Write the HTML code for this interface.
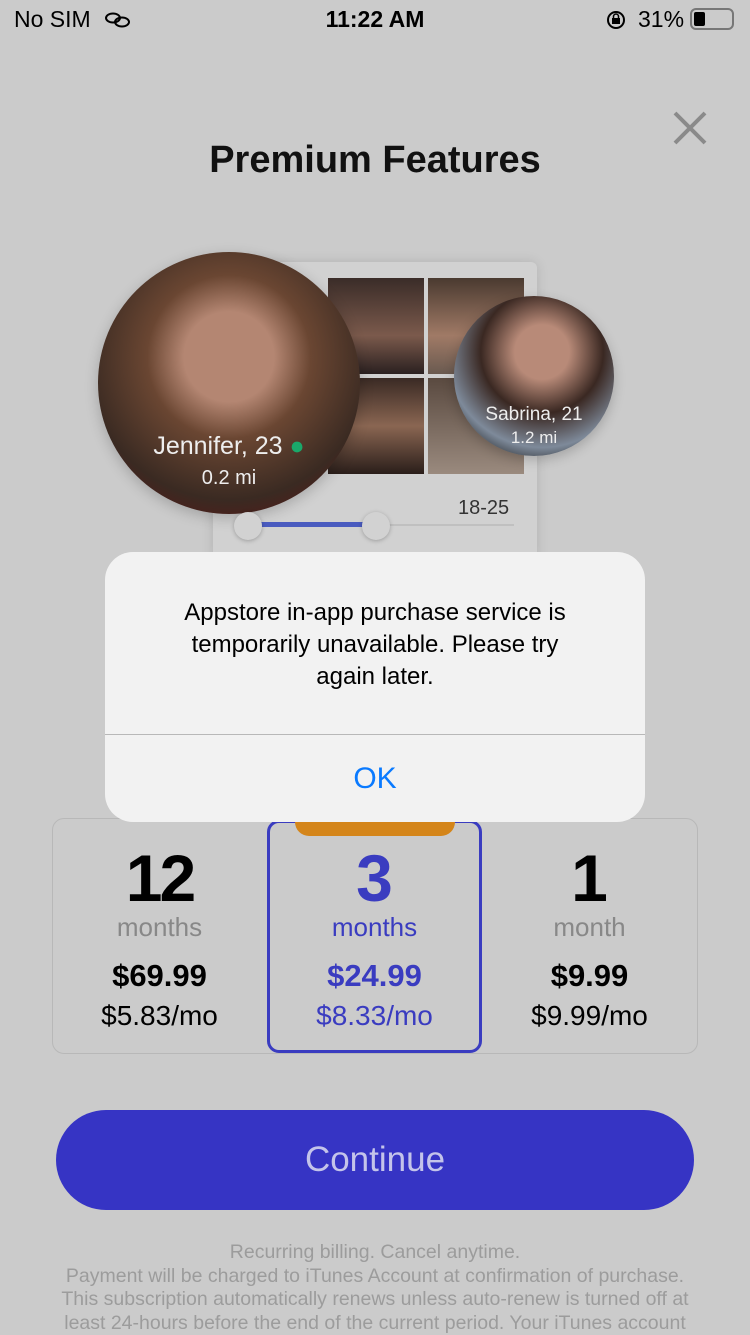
<!DOCTYPE html>
<html><head><meta charset="utf-8"><style>
*{margin:0;padding:0;box-sizing:border-box}
body{width:750px;height:1334px;background:#cbcbcb;font-family:"Liberation Sans",sans-serif;position:relative;overflow:hidden}
.a{position:absolute}
.c{text-align:center}
</style></head><body>
<div class="a" style="left:14px;top:6px;font-size:23px;color:#000">No SIM</div>
<svg class="a" style="left:104px;top:12px" width="28" height="16"><ellipse cx="9" cy="6" rx="7" ry="4.5" fill="none" stroke="#000" stroke-width="2"/><ellipse cx="18" cy="10" rx="7" ry="4.5" fill="none" stroke="#000" stroke-width="2"/></svg>
<div class="a c" style="left:0;width:750px;top:6px;font-size:23px;font-weight:bold;color:#000">11:22 AM</div>
<svg class="a" style="left:605px;top:9px" width="22" height="22"><circle cx="11" cy="11" r="8" fill="none" stroke="#000" stroke-width="2"/><rect x="7" y="9" width="8" height="6" fill="#000"/><path d="M8.5 9V7.5a2.5 2.5 0 0 1 5 0V9" fill="none" stroke="#000" stroke-width="1.5"/></svg>
<div class="a" style="left:638px;top:6px;font-size:23px;color:#000">31%</div>
<div class="a" style="left:690px;top:8px;width:44px;height:22px;border:2px solid #777;border-radius:6px"><div style="margin:2px;width:11px;height:14px;background:#000;border-radius:2px"></div></div>

<svg class="a" style="left:672px;top:110px" width="36" height="36"><path d="M3 3L33 33M33 3L3 33" stroke="#8a8a8a" stroke-width="4"/></svg>
<div class="a c" style="left:0;width:750px;top:139px;font-size:38px;font-weight:bold;color:#111">Premium Features</div>

<div class="a" style="left:213px;top:262px;width:324px;height:300px;background:#d1d1d1;box-shadow:0 0 12px rgba(0,0,0,.12);border-radius:6px"></div>
<div class="a" style="left:328px;top:278px;width:96px;height:96px;background:linear-gradient(#3a2c28,#7b5a4c 60%,#2a2020)"></div>
<div class="a" style="left:428px;top:278px;width:96px;height:96px;background:linear-gradient(#4a3a30,#a07a66 60%,#6a5a50)"></div>
<div class="a" style="left:328px;top:378px;width:96px;height:96px;background:linear-gradient(#3a2a24,#8a6652 50%,#2a1e1a)"></div>
<div class="a" style="left:428px;top:378px;width:96px;height:96px;background:linear-gradient(#5a4a40,#9a8a7e)"></div>
<div class="a" style="left:98px;top:252px;width:262px;height:262px;border-radius:50%;background:radial-gradient(circle at 50% 40%,#b48672 0 22%,#6a4632 40%,#3a2a22 70%,#5a1616 90%);box-shadow:0 4px 14px rgba(0,0,0,.2)"></div>
<div class="a c" style="left:98px;width:262px;top:432px;font-size:25px;color:#eee">Jennifer, 23 <span style="color:#1aa86a">●</span></div>
<div class="a c" style="left:98px;width:262px;top:467px;font-size:20px;color:#eee">0.2 mi</div>
<div class="a" style="left:454px;top:296px;width:160px;height:160px;border-radius:50%;background:radial-gradient(circle at 55% 35%,#b88a78 0 20%,#3a2822 45%,#7e8a9a 70%,#111 90%);box-shadow:0 4px 12px rgba(0,0,0,.2)"></div>
<div class="a c" style="left:454px;width:160px;top:404px;font-size:19px;color:#eee">Sabrina, 21</div>
<div class="a c" style="left:454px;width:160px;top:428px;font-size:17px;color:#eee">1.2 mi</div>
<div class="a" style="left:458px;top:497px;font-size:20px;color:#333">18-25</div>
<div class="a" style="left:248px;top:524px;width:266px;height:2px;background:#c0c0c0"></div>
<div class="a" style="left:248px;top:522px;width:128px;height:5px;background:#4a5bbf"></div>
<div class="a" style="left:234px;top:512px;width:28px;height:28px;border-radius:50%;background:#d2d2d2;box-shadow:0 1px 4px rgba(0,0,0,.25)"></div>
<div class="a" style="left:362px;top:512px;width:28px;height:28px;border-radius:50%;background:#d2d2d2;box-shadow:0 1px 4px rgba(0,0,0,.25)"></div>

<div class="a" style="left:52px;top:818px;width:646px;height:236px;border:1px solid #b8b8b8;border-radius:12px"></div>
<div class="a" style="left:267px;top:820px;width:215px;height:233px;border:3px solid #3a3cc0;border-radius:12px"></div>
<div class="a" style="left:295px;top:798px;width:160px;height:38px;background:#d4851a;border-radius:14px"></div>
<div class="a c" style="left:52px;width:215px;top:840px;font-size:66px;font-weight:bold;color:#000;letter-spacing:-3px">12</div>
<div class="a c" style="left:52px;width:215px;top:912px;font-size:26px;color:#888">months</div>
<div class="a c" style="left:52px;width:215px;top:958px;font-size:31px;font-weight:bold;color:#000">$69.99</div>
<div class="a c" style="left:52px;width:215px;top:1000px;font-size:28px;color:#000">$5.83/mo</div>
<div class="a c" style="left:267px;width:215px;top:840px;font-size:66px;font-weight:bold;color:#3a3cc0">3</div>
<div class="a c" style="left:267px;width:215px;top:912px;font-size:26px;color:#3a3cc0">months</div>
<div class="a c" style="left:267px;width:215px;top:958px;font-size:31px;font-weight:bold;color:#3a3cc0">$24.99</div>
<div class="a c" style="left:267px;width:215px;top:1000px;font-size:28px;color:#3a3cc0">$8.33/mo</div>
<div class="a c" style="left:482px;width:215px;top:840px;font-size:66px;font-weight:bold;color:#000">1</div>
<div class="a c" style="left:482px;width:215px;top:912px;font-size:26px;color:#888">month</div>
<div class="a c" style="left:482px;width:215px;top:958px;font-size:31px;font-weight:bold;color:#000">$9.99</div>
<div class="a c" style="left:482px;width:215px;top:1000px;font-size:28px;color:#000">$9.99/mo</div>

<div class="a c" style="left:56px;top:1110px;width:638px;height:100px;border-radius:50px;background:#3634c4;color:#c4c4ea;font-size:35px;line-height:100px">Continue</div>
<div class="a c" style="left:20px;width:710px;top:1241px;font-size:19.5px;line-height:23.5px;color:#9c9c9c">Recurring billing. Cancel anytime.<br>Payment will be charged to iTunes Account at confirmation of purchase.<br>This subscription automatically renews unless auto-renew is turned off at<br>least 24-hours before the end of the current period. Your iTunes account</div>

<div class="a" style="left:105px;top:552px;width:540px;height:270px;background:#f2f2f2;border-radius:28px;overflow:hidden">
<div class="c" style="padding:45px 50px 0;font-size:24px;line-height:32px;color:#000">Appstore in-app purchase service is temporarily unavailable. Please try<br>again later.</div>
<div class="a" style="left:0;top:182px;width:540px;height:1px;background:#b8b8b8"></div>
<div class="a c" style="left:0;top:183px;width:540px;height:87px;line-height:87px;font-size:30px;color:#0a7aff">OK</div>
</div>
</body></html>
